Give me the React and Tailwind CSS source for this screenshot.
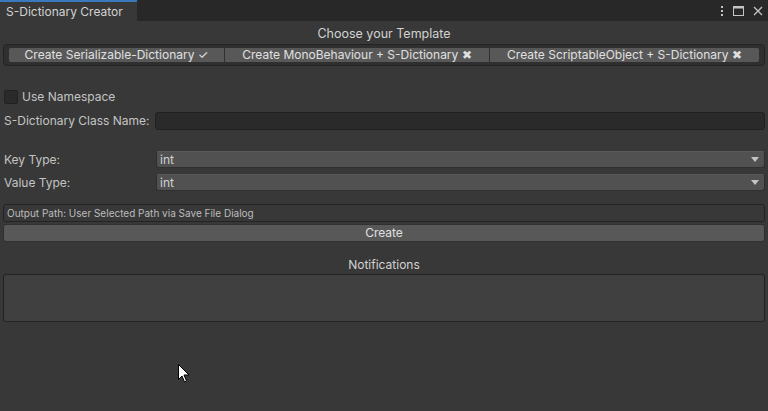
import React from "react";

const font = { fontFamily: "Inter, 'Noto Sans', sans-serif" };

function Dropdown({ value }) {
  return (
    <div className="flex-1 h-[17px] bg-[#515151] border border-[#303030] border-t-[#5a5a5a] rounded-[3px] flex items-center justify-between pl-[3px] pr-[5px] text-[#d2d2d2]">
      <span>{value}</span>
      <svg width="8" height="5" viewBox="0 0 8 5">
        <path d="M0 0 L8 0 L4 5 Z" fill="#c4c4c4" />
      </svg>
    </div>
  );
}

export default function App() {
  return (
    <div className="w-[768px] h-[411px] bg-[#383838] text-[12px] text-[#c4c4c4] flex flex-col relative overflow-hidden" style={font}>
      {/* tab bar */}
      <div className="h-[21px] bg-[#282828] flex items-stretch shrink-0">
        <div className="w-[137px] bg-[#383838] border-t-2 border-[#3a79bb] pl-[6px] flex items-center text-[#d2d2d2] text-[12px]">
          S-Dictionary Creator
        </div>
        <div className="flex-1" />
        <div className="flex items-center gap-[9px] pr-[5px] text-[#c4c4c4]">
          <svg width="4" height="12" viewBox="0 0 4 12">
            <rect x="1" y="1" width="2" height="2" fill="#c4c4c4" />
            <rect x="1" y="5" width="2" height="2" fill="#c4c4c4" />
            <rect x="1" y="9" width="2" height="2" fill="#c4c4c4" />
          </svg>
          <svg width="11" height="10" viewBox="0 0 11 10">
            <rect x="0.5" y="0.5" width="10" height="9" fill="none" stroke="#c4c4c4" />
            <rect x="0.5" y="0.5" width="10" height="2" fill="#c4c4c4" />
          </svg>
          <svg width="10" height="10" viewBox="0 0 10 10">
            <path d="M1 1 L9 9 M9 1 L1 9" stroke="#c4c4c4" strokeWidth="1.3" />
          </svg>
        </div>
      </div>

      <div className="flex flex-col px-[3px]">
        <div className="text-center text-[#d2d2d2] text-[12.5px] mt-[4px] h-[17px]">Choose your Template</div>

        {/* toggle group */}
        <div className="mt-[2px] h-[22px] border border-[#232323] bg-[#2f2f2f] rounded-[4px] flex items-stretch p-[2px] pl-[4px] pr-[4px]">
          <div className="w-[217px] bg-[#585858] border border-[#303030] rounded-l-[3px] flex items-center justify-center text-[#e0e0e0]">
            Create Serializable-Dictionary ✓
          </div>
          <div className="w-[265px] bg-[#585858] border border-[#303030] border-l-0 flex items-center justify-center text-[#e0e0e0]">
            Create MonoBehaviour + S-Dictionary ✖
          </div>
          <div className="flex-1 bg-[#585858] border border-[#303030] border-l-0 rounded-r-[3px] flex items-center justify-center text-[#e0e0e0]">
            Create ScriptableObject + S-Dictionary ✖
          </div>
        </div>

        {/* namespace */}
        <div className="mt-[23px] flex items-center gap-[4px] h-[16px] pl-[1px]">
          <div className="w-[14px] h-[14px] bg-[#2a2a2a] border border-[#212121] rounded-[2px]" />
          <span>Use Namespace</span>
        </div>

        <div className="mt-[7px] flex items-center h-[18px]">
          <span className="w-[152px] pl-[1px]">S-Dictionary Class Name:</span>
          <div className="flex-1 h-[18px] bg-[#2a2a2a] border border-[#212121] rounded-[3px]" />
        </div>

        <div className="mt-[21px] flex items-center h-[17px]">
          <span className="w-[153px] pl-[1px]">Key Type:</span>
          <Dropdown value="int" />
        </div>
        <div className="mt-[6px] flex items-center h-[17px]">
          <span className="w-[153px] pl-[1px]">Value Type:</span>
          <Dropdown value="int" />
        </div>

        <div className="mt-[13px] h-[18px] bg-[#383838] border border-[#232323] rounded-[3px] flex items-center pl-[3px] text-[10px] text-[#bdbdbd]">
          Output Path: User Selected Path via Save File Dialog
        </div>
        <div className="mt-[2px] h-[18px] bg-[#585858] border border-[#303030] rounded-[3px] flex items-center justify-center text-[#e0e0e0]">
          Create
        </div>

        <div className="mt-[14px] text-center text-[#d2d2d2] h-[16px]">Notifications</div>
        <div className="mt-[2px] h-[48px] bg-[#404040] border border-[#232323] rounded-[3px]" />
      </div>

      {/* mouse cursor */}
      <svg className="absolute left-[178px] top-[364px]" width="12" height="19" viewBox="0 0 12 19">
        <path d="M0.5 0.5 L0.5 15.5 L4 12 L6.5 18 L8.5 17 L6 11 L11 11 Z" fill="#ffffff" stroke="#000000" strokeWidth="1" />
      </svg>
    </div>
  );
}
